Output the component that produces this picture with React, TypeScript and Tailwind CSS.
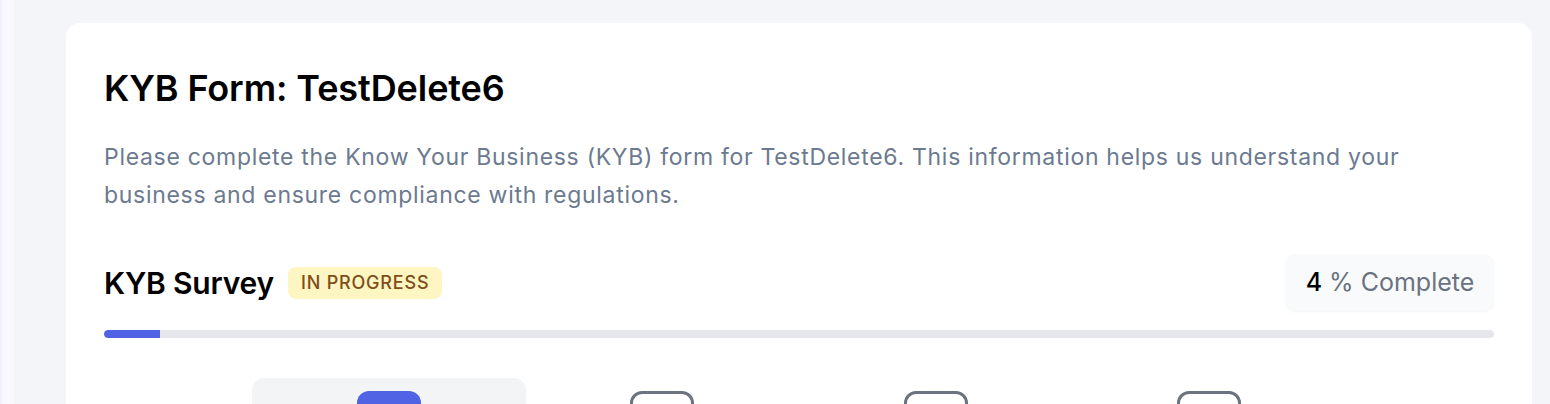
const steps = [
  { key: "business", active: true },
  { key: "ownership", active: false },
  { key: "financial", active: false },
  { key: "documents", active: false },
];

function StepIcon({ active }: { active: boolean }) {
  if (active) {
    return <div className="w-16 h-16 rounded-[12px] bg-[#4f63e4]" />;
  }
  return (
    <div className="w-16 h-16 rounded-[12px] border-[3px] border-[#6b7280] bg-white" />
  );
}

function App() {
  const percent = 4;

  return (
    <div
      className="flex w-[1550px] h-[404px] overflow-hidden bg-[#f4f5f9]"
      style={{ fontFamily: "Inter, 'Noto Sans', sans-serif" }}
    >
      {/* sidebar edge */}
      <div className="w-[14px] shrink-0 bg-[#f8f8fe] border-l-2 border-[#f1f1fb]" />

      <div className="flex-1 pl-[52px] pr-[18px] pt-[23px]">
        <div className="bg-white rounded-[14px] px-[38px] pt-[44px] pb-10">
          <h1 className="text-[36px] leading-[42px] font-semibold text-black tracking-[-0.1px]">
            KYB Form: TestDelete6
          </h1>

          <p className="mt-[29px] text-[23px] leading-[38px] tracking-[0.7px] text-[#6b7a90] max-w-[1330px]">
            Please complete the Know Your Business (KYB) form for TestDelete6.
            This information helps us understand your business and ensure
            compliance with regulations.
          </p>

          {/* SURVEY HEADER */}
          <div className="mt-[40px] flex items-center justify-between">
            <div className="flex items-center gap-[14px]">
              <h2 className="text-[30px] leading-[34px] font-semibold text-black tracking-[-0.2px]">
                KYB Survey
              </h2>
              <span className="px-[13px] h-8 flex items-center rounded-[8px] bg-[#fdf6c3] text-[#7f4e17] text-[18px] font-medium tracking-[0.8px]">
                IN PROGRESS
              </span>
            </div>
            <div className="h-[57px] w-[208px] flex items-center justify-center gap-[7px] rounded-[10px] bg-[#f9fafb] shadow-[0_1px_3px_rgba(0,0,0,0.05)]">
              <span className="text-[25px] font-medium text-black">{percent}</span>
              <span className="text-[25px] text-[#6b7280]">% Complete</span>
            </div>
          </div>

          {/* PROGRESS BAR */}
          <div className="mt-[19px] h-2 w-full rounded-full bg-[#e5e7eb] overflow-hidden">
            <div
              className="h-full rounded-l-full bg-[#4f63e4]"
              style={{ width: `${percent}%` }}
            />
          </div>

          {/* STEPS */}
          <div className="mt-10 mx-auto w-[1094px] grid grid-cols-4">
            {steps.map((step) => (
              <div
                key={step.key}
                className={
                  step.active
                    ? "flex justify-center pt-[13px] pb-10 rounded-[12px] bg-[#f3f4f6]"
                    : "flex justify-center pt-[13px] pb-10"
                }
              >
                <StepIcon active={step.active} />
              </div>
            ))}
          </div>
        </div>
      </div>
    </div>
  );
}

export default App;
